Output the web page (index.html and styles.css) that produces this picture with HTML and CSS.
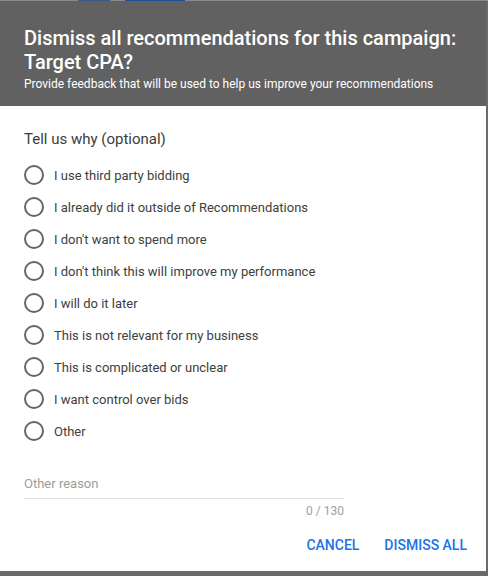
FILE: index.html
```html
<!DOCTYPE html>
<html>
<head>
<meta charset="utf-8">
<link rel="stylesheet" href="styles.css">
</head>
<body>
<div class="backdrop-top"><span class="bt-text"></span><span class="bt-bar"></span></div>
<div class="stage">
  <div class="dialog">
    <div class="header">
      <div class="title">Dismiss all recommendations for this campaign: Target CPA?</div>
      <div class="subtitle">Provide feedback that will be used to help us improve your recommendations</div>
    </div>
    <div class="body">
      <div class="prompt">Tell us why (optional)</div>
      <ul class="options">
        <li class="option"><span class="radio"></span><span class="label">I use third party bidding</span></li>
        <li class="option"><span class="radio"></span><span class="label">I already did it outside of Recommendations</span></li>
        <li class="option"><span class="radio"></span><span class="label">I don't want to spend more</span></li>
        <li class="option"><span class="radio"></span><span class="label">I don't think this will improve my performance</span></li>
        <li class="option"><span class="radio"></span><span class="label">I will do it later</span></li>
        <li class="option"><span class="radio"></span><span class="label">This is not relevant for my business</span></li>
        <li class="option"><span class="radio"></span><span class="label">This is complicated or unclear</span></li>
        <li class="option"><span class="radio"></span><span class="label">I want control over bids</span></li>
        <li class="option"><span class="radio"></span><span class="label">Other</span></li>
      </ul>
      <div class="field">
        <div class="input">Other reason</div>
        <div class="counter">0 / 130</div>
      </div>
      <div class="actions">
        <button class="btn">CANCEL</button>
        <button class="btn">DISMISS ALL</button>
      </div>
    </div>
  </div>
</div>
</body>
</html>
```

FILE: styles.css
```css
html, body {
  margin: 0;
  padding: 0;
}
body {
  width: 488px;
  height: 576px;
  overflow: hidden;
  background: #6a6a6a;
  font-family: Roboto, "Liberation Sans", sans-serif;
}
.backdrop-top {
  height: 1px;
  background: #8a8a8a;
  display: flex;
}
.bt-text {
  margin-left: 78px;
  width: 32px;
  background: #3b5a8a;
}
.bt-bar {
  margin-left: 15px;
  width: 60px;
  background: #1d4f9a;
}
.stage {
  display: flex;
  background: #6a6a6a;
  height: 575px;
}
.dialog {
  width: 486px;
  height: 570px;
  background: #fff;
  display: flex;
  flex-direction: column;
}
.header {
  background: #616161;
  color: #fff;
  padding: 25px 24px 11px;
  height: 69px;
}
.title {
  font-size: 20px;
  font-weight: 500;
  line-height: 24px;
}
.subtitle {
  font-size: 12px;
  line-height: 16px;
  margin-top: 2px;
}
.body {
  padding: 22px 24px 0;
  flex: 1;
  display: flex;
  flex-direction: column;
}
.prompt {
  font-size: 15px;
  color: #3c3c3c;
  line-height: 20px;
  margin-top: 1px;
}
.options {
  list-style: none;
  margin: 10px 0 0;
  padding: 0;
}
.option {
  display: flex;
  align-items: center;
  height: 32px;
}
.radio {
  width: 16px;
  height: 16px;
  border: 2px solid #666;
  border-radius: 50%;
  flex: none;
}
.label {
  margin-left: 10px;
  font-size: 13px;
  color: #404040;
}
.field {
  width: 320px;
  margin-top: 27px;
}
.input {
  font-size: 13px;
  color: #9e9e9e;
  height: 24px;
  line-height: 20px;
  border-bottom: 1px solid #e0e0e0;
}
.counter {
  text-align: right;
  font-size: 12px;
  color: #9e9e9e;
  margin-top: 4px;
  line-height: 16px;
}
.actions {
  display: flex;
  justify-content: flex-end;
  gap: 9px;
  margin-top: 8px;
  margin-right: -13px;
}
.btn {
  border: none;
  background: none;
  font-family: Roboto, "Liberation Sans", sans-serif;
  font-size: 14px;
  font-weight: 500;
  color: #1a73e8;
  padding: 8px 8px;
  line-height: 20px;
}
```
